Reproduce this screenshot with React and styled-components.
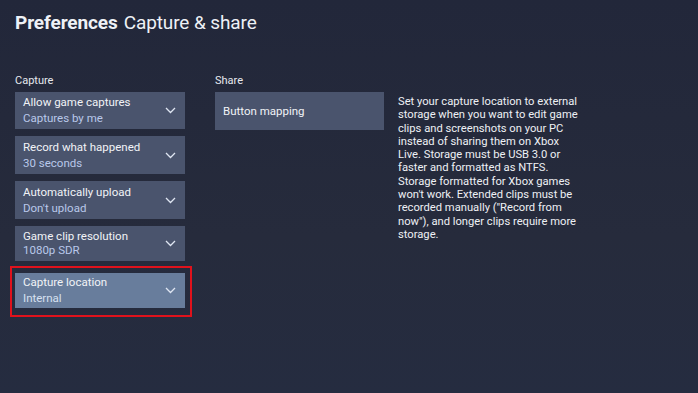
import React from "react";
import styled, { createGlobalStyle } from "styled-components";

const Global = createGlobalStyle`
  html, body {
    margin: 0;
    padding: 0;
    background: #232838;
  }
  body {
    font-family: Roboto, "Liberation Sans", sans-serif;
    color: #eef1f6;
  }
`

const Page = styled.div`
  width: 698px;
  height: 393px;
  box-sizing: border-box;
  padding: 11px 15px 0 15px;
  background: linear-gradient(180deg, #22273a 0%, #262b3c 60%, #252c40 100%);
  overflow: hidden;
`

const Title = styled.h1`
  margin: 0;
  font-size: 19px;
  font-weight: 400;
  letter-spacing: -0.1px;
  color: #eef1f6;
  line-height: 24px;

  b {
    font-weight: 700;
    margin-right: 6px;
  }
`

const Columns = styled.div`
  display: flex;
  margin-top: 39px;
`

const Column = styled.div`
  width: ${p => p.width}px;
  margin-right: ${p => p.gap}px;
  display: flex;
  flex-direction: column;
`

const Label = styled.div`
  font-size: 11px;
  line-height: 14px;
  color: #e6e9ef;
  margin-bottom: 4px;
`

const List = styled.div`
  display: flex;
  flex-direction: column;
  gap: 7px;
`

const Card = styled.div`
  position: relative;
  height: ${p => p.h || 37}px;
  box-sizing: border-box;
  padding: 0 8px;
  background: ${p => (p.active ? "#687d9c" : "#4a546d")};
  display: flex;
  align-items: center;
  justify-content: space-between;
  margin-top: ${p => p.push || 0}px;
`

const Texts = styled.div`
  display: flex;
  flex-direction: column;
  gap: ${p => p.tight ? 1 : 3}px;
`

const Main = styled.div`
  font-size: 11.5px;
  line-height: 13px;
  color: #f1f3f7;
`

const Sub = styled.div`
  font-size: 11.5px;
  line-height: 13px;
  color: ${p => (p.active ? "#d6e0f0" : "#b9c8ea")};
`

const Marker = styled.div`
  position: absolute;
  left: -5px;
  right: -7px;
  top: -7px;
  bottom: -9px;
  border: 2px solid #e0121c;
  pointer-events: none;
`

const Info = styled.p`
  margin: 21px 0 0 0;
  font-size: 11.2px;
  line-height: 13.3px;
  color: #eef0f4;
  white-space: nowrap;
`

const Chevron = () => (
  <svg width="11" height="7" viewBox="0 0 11 7" style={{ marginRight: 1 }}>
    <path d="M1 1 L5.5 5.5 L10 1" fill="none" stroke="#dfe6f2" strokeWidth="1.3" />
  </svg>
)

const captures = [
  { main: "Allow game captures", sub: "Captures by me" },
  { main: "Record what happened", sub: "30 seconds", h: 38 },
  { main: "Automatically upload", sub: "Don't upload", h: 38 },
  { main: "Game clip resolution", sub: "1080p SDR", h: 35, tight: true },
  { main: "Capture location", sub: "Internal", h: 35, active: true, push: 5 },
]

const info = [
  "Set your capture location to external",
  "storage when you want to edit game",
  "clips and screenshots on your PC",
  "instead of sharing them on Xbox",
  "Live. Storage must be USB 3.0 or",
  "faster and formatted as NTFS.",
  "Storage formatted for Xbox games",
  "won't work. Extended clips must be",
  "recorded manually (\"Record from",
  "now\"), and longer clips require more",
  "storage.",
]

export default function App() {
  return (
    <Page>
      <Global />
      <Title>
        <b>Preferences</b>Capture &amp; share
      </Title>
      <Columns>
        <Column width={170} gap={30}>
          <Label>Capture</Label>
          <List>
            {captures.map(c => (
              <Card key={c.main} h={c.h} active={c.active} push={c.push}>
                <Texts tight={c.tight}>
                  <Main>{c.main}</Main>
                  <Sub active={c.active}>{c.sub}</Sub>
                </Texts>
                <Chevron />
                {c.active && <Marker />}
              </Card>
            ))}
          </List>
        </Column>
        <Column width={169} gap={14}>
          <Label>Share</Label>
          <List>
            <Card h={38}>
              <Main>Button mapping</Main>
            </Card>
          </List>
        </Column>
        <Column width={200} gap={0}>
          <Info>
            {info.map((l, i) => (
              <React.Fragment key={i}>
                {l}
                <br />
              </React.Fragment>
            ))}
          </Info>
        </Column>
      </Columns>
    </Page>
  )
}
